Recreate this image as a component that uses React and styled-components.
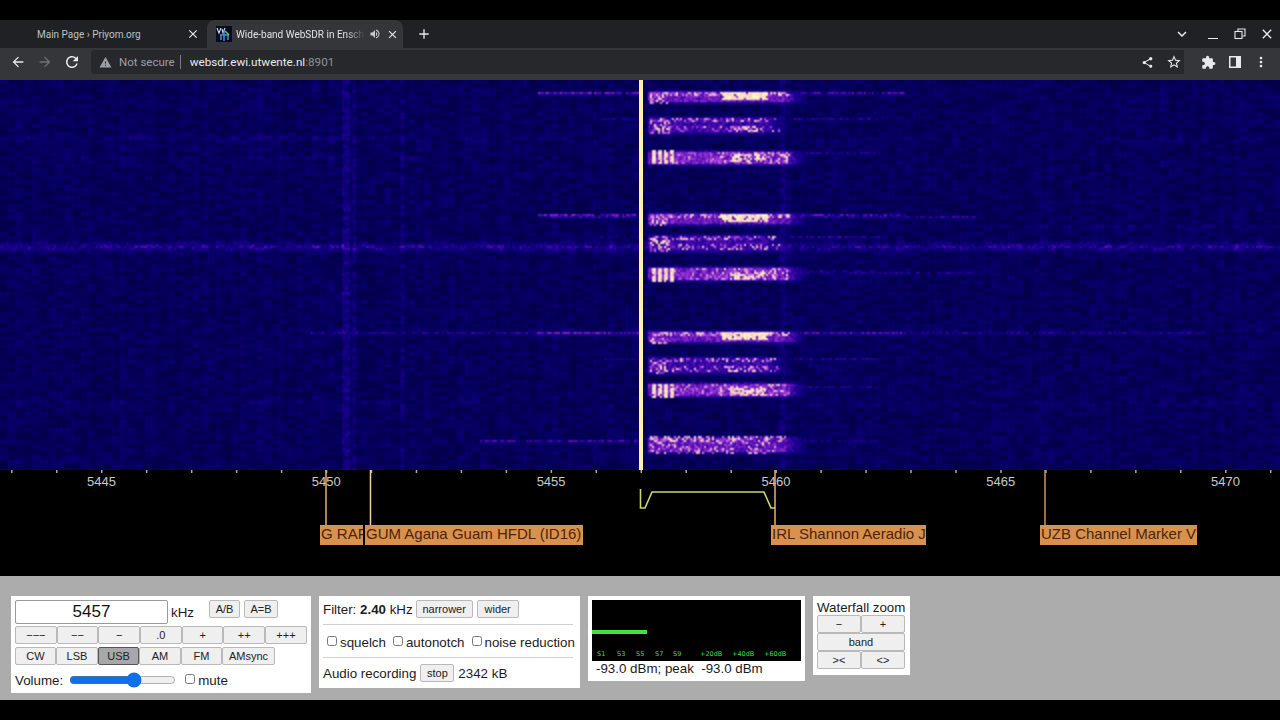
import React, { useEffect, useRef } from 'react';
import styled, { createGlobalStyle } from 'styled-components';
import {
  MdArrowBack, MdArrowForward, MdRefresh, MdWarning, MdStarBorder, MdExtension,
  MdMoreVert, MdClose, MdAdd, MdExpandMore, MdVolumeUp, MdShare
} from 'react-icons/md';

const GlobalStyle = createGlobalStyle`
  html, body { margin: 0; padding: 0; background: #000; }
  body { font-family: "Liberation Sans", Arial, sans-serif; }
`;

const Page = styled.div`
  width: 1280px;
  height: 720px;
  padding: 20px 0;
  box-sizing: border-box;
  display: flex;
  flex-direction: column;
  overflow: hidden;
  background: #000;
`;

/* browser chrome */
const TabStrip = styled.div`
  height: 28px;
  flex: none;
  display: flex;
  align-items: stretch;
  background: #202124;
  color: #e8eaed;
`;
const Tab = styled.div`
  width: ${p => p.$w}px;
  margin-right: ${p => p.$mr || 0}px;
  box-sizing: border-box;
  padding: 0 ${p => p.$pr}px 0 9px;
  display: flex;
  align-items: center;
  background: ${p => (p.$active ? '#35363a' : 'transparent')};
  border-radius: 8px 8px 0 0;
  font: 10px Roboto, "Liberation Sans", sans-serif;
`;
const TabTitle = styled.span`
  flex: 1;
  min-width: 0;
  white-space: nowrap;
  overflow: hidden;
  margin-left: ${p => p.$ml}px;
  color: ${p => (p.$active ? '#dfe1e5' : '#bdc1c6')};
  ${p => p.$fade && 'mask-image: linear-gradient(to right, #000 85%, transparent);'}
`;
const FaviconBox = styled.span`
  width: 16px;
  height: 16px;
  flex: none;
  display: block;
`;
const IconSlot = styled.span`
  display: flex;
  align-items: center;
  justify-content: center;
  width: ${p => p.$w || 16}px;
  flex: none;
  color: ${p => p.$color || '#e8eaed'};
`;
const WindowControls = styled.div`
  margin-left: auto;
  display: flex;
  align-items: center;
`;
const Minimize = styled.span`
  display: block;
  width: 10px;
  height: 1px;
  margin-top: 8px;
  background: #e8eaed;
`;
const Toolbar = styled.div`
  height: 32px;
  flex: none;
  box-sizing: border-box;
  display: flex;
  align-items: center;
  padding: 2px 0 6px 5px;
  background: #35363a;
`;
const NavIcons = styled.div`
  display: flex;
  align-items: center;
  gap: 1px;
  margin-right: 6px;
`;
const Omnibox = styled.div`
  width: 1093px;
  height: 24px;
  box-sizing: border-box;
  display: flex;
  align-items: center;
  padding: 0 0 0 7px;
  background: #27282b;
  border-radius: 4px 0 0 4px;
  font: 11.5px Roboto, "Liberation Sans", sans-serif;
`;
const Secure = styled.span`
  color: #9aa0a6;
  margin-left: 7px;
`;
const Divider = styled.span`
  width: 1px;
  height: 14px;
  background: #7a7d82;
  margin: 0 9px 0 5px;
`;
const Host = styled.span`
  color: #e8eaed;
  font-size: 11.7px;
`;
const Port = styled.span`
  color: #8e9297;
`;
const OmniActions = styled.div`
  margin-left: auto;
  display: flex;
  gap: 11px;
  padding-right: 2px;
`;
const ExtIcons = styled.div`
  display: flex;
  align-items: center;
  margin-left: 15px;
  gap: 8.5px;
`;

/* waterfall */
const WaterfallCanvas = styled.canvas`
  display: block;
  flex: none;
  width: 1280px;
  height: 390px;
`;

function mulberry(seed) {
  let a = seed;
  return () => {
    a |= 0; a = (a + 0x6d2b79f5) | 0;
    let t = Math.imul(a ^ (a >>> 15), 1 | a);
    t = (t + Math.imul(t ^ (t >>> 7), 61 | t)) ^ t;
    return ((t ^ (t >>> 14)) >>> 0) / 4294967296;
  };
}

const STOPS = [
  [0, 2, 0, 50],
  [0.2, 6, 0, 100],
  [0.36, 30, 0, 150],
  [0.52, 105, 20, 190],
  [0.68, 175, 75, 220],
  [0.84, 245, 200, 200],
  [1, 255, 250, 190]
];

function colour(v) {
  const x = Math.max(0, Math.min(1, v));
  for (let i = 1; i < STOPS.length; i++) {
    if (x <= STOPS[i][0]) {
      const a = STOPS[i - 1], b = STOPS[i];
      const t = (x - a[0]) / (b[0] - a[0]);
      return [a[1] + (b[1] - a[1]) * t, a[2] + (b[2] - a[2]) * t, a[3] + (b[3] - a[3]) * t];
    }
  }
  return STOPS[6].slice(1);
}

// y values are relative to the top of the waterfall, x in page pixels
const BURSTS = [
  { kind: 'a', y: 16 }, { kind: 'b', y: 40 }, { kind: 'c', y: 77 },
  { kind: 'a', y: 138 }, { kind: 'b', y: 158 }, { kind: 'c', y: 194 },
  { kind: 'a', y: 256 }, { kind: 'b', y: 280 }, { kind: 'c', y: 310 },
  { kind: 'd', y: 364 }
];

function paintWaterfall(canvas) {
  const W = 640, H = 195;
  const off = document.createElement('canvas');
  off.width = W;
  off.height = H;
  const octx = off.getContext('2d');
  const rnd = mulberry(5457);
  const field = new Float32Array(W * H);
  const add = (x, y, v) => {
    const px = Math.round(x / 2), py = Math.round(y / 2);
    if (px >= 0 && px < W && py >= 0 && py < H) field[py * W + px] = Math.max(field[py * W + px], v);
  };
  const bump = (x, y, v) => {
    const px = Math.round(x / 2), py = Math.round(y / 2);
    if (px >= 0 && px < W && py >= 0 && py < H) field[py * W + px] += v;
  };

  // noise floor, coarser cells like the compressed video
  const cols = new Float32Array(W);
  for (let x = 0; x < W; x++) cols[x] = rnd() * 0.04;
  for (let y = 0; y < H; y += 2) {
    for (let x = 0; x < W; x += 4) {
      const v = 0.07 + rnd() * 0.14;
      for (let j = 0; j < 2 && y + j < H; j++) {
        for (let i = 0; i < 4 && x + i < W; i++) field[(y + j) * W + x + i] = v + cols[x + i];
      }
    }
  }

  // faint horizontal carriers
  const band = (y, h, x0, x1, amp) => {
    for (let yy = y - h; yy <= y + h; yy += 2) {
      const fall = 1 - Math.abs(yy - y) / (h + 1);
      for (let x = x0; x < x1; x += 2) bump(x, yy, amp * fall * (0.4 + rnd()));
    }
  };
  band(165, 6, 0, 1280, 0.2);
  band(57, 3, 0, 420, 0.09);
  band(76, 1, 0, 420, 0.07);
  band(57, 2, 420, 1280, 0.04);
  band(146, 2, 1000, 1280, 0.06);
  band(250, 2, 300, 1280, 0.05);
  band(320, 3, 0, 500, 0.04);
  band(322, 3, 800, 1280, 0.05);

  // faint vertical columns
  const column = (x, w, amp) => {
    for (let y = 0; y < 390; y += 2) {
      for (let xx = x - w; xx <= x + w; xx += 2) bump(xx, y, amp * (0.5 + rnd() * 0.8));
    }
  };
  column(345, 3, 0.13);
  column(353, 1, 0.09);
  column(400, 1, 0.07);
  column(552, 1, 0.02);
  column(782, 2, 0.08);
  column(1107, 1, 0.02);

  // tail of a transmission: a thin line left and right of the carrier
  const line = (y, x0, x1, amp) => {
    for (let x = x0; x < x1; x += 2) {
      if (rnd() > 0.15) {
        add(x, y, amp * (0.7 + rnd() * 0.5));
        add(x, y + 2, amp * 0.55);
      }
    }
  };
  const block = (y0, y1, x0, x1, base, spread, chance) => {
    for (let y = y0; y < y1; y += 2) {
      for (let x = x0; x < x1; x += 2) {
        if (rnd() < chance) add(x, y, base + rnd() * spread);
      }
    }
  };
  // soft purple body that fades toward its right end
  const glow = (y0, y1, x0, x1, v) => {
    for (let y = y0; y < y1; y += 2) {
      const edge = Math.min(y - y0 + 2, y1 - y) / 4;
      for (let x = x0; x < x1; x += 2) {
        const tail = x > x1 - 25 ? (x1 - x) / 25 : 1;
        add(x, y, (0.18 + (v - 0.18) * Math.min(1, edge) * tail) * (0.82 + rnd() * 0.36));
      }
    }
  };

  BURSTS.forEach(({ kind, y }) => {
    if (kind === 'a') {
      line(y - 4, 535, 640, 0.5);
      line(y - 4, 800, 905, 0.46);
      glow(y - 6, y + 8, 648, 808, 0.52);
      block(y - 5, y - 1, 650, 720, 0.6, 0.3, 0.55);
      block(y - 5, y - 1, 720, 790, 0.66, 0.3, 0.6);
      block(y - 4, y + 3, 722, 768, 0.84, 0.18, 0.85);
      block(y - 3, y + 6, 650, 668, 0.56, 0.4, 0.45);
    } else if (kind === 'b') {
      line(y - 2, 600, 640, 0.3);
      line(y - 2, 790, 880, 0.36);
      glow(y - 4, y + 15, 648, 790, 0.42);
      block(y - 3, y + 1, 650, 775, 0.52, 0.38, 0.45);
      block(y + 6, y + 12, 650, 780, 0.48, 0.4, 0.28);
      block(y + 2, y + 14, 650, 670, 0.6, 0.38, 0.45);
      block(y + 5, y + 10, 728, 768, 0.6, 0.36, 0.38);
    } else if (kind === 'c') {
      line(y - 5, 800, 880, 0.34);
      glow(y - 8, y + 8, 648, 808, 0.54);
      block(y - 6, y + 5, 672, 720, 0.52, 0.3, 0.3);
      block(y - 6, y + 5, 720, 790, 0.58, 0.34, 0.42);
      block(y - 3, y + 4, 730, 765, 0.76, 0.24, 0.55);
      for (let k = 0; k < 4; k++) block(y - 7, y + 7, 652 + k * 6, 655 + k * 6, 0.8, 0.2, 0.9);
    } else {
      line(y - 5, 480, 640, 0.42);
      line(y - 5, 800, 880, 0.3);
      glow(y - 8, y + 10, 648, 808, 0.5);
      block(y - 8, y - 3, 650, 785, 0.6, 0.32, 0.5);
      block(y - 3, y + 9, 650, 775, 0.52, 0.38, 0.3);
    }
  });
  // long faint lines at the later transmissions
  line(252, 305, 640, 0.36);
  line(252, 800, 1205, 0.34);
  line(192, 800, 975, 0.34);
  line(136, 550, 640, 0.4);
  line(136, 800, 975, 0.38);

  const img = octx.createImageData(W, H);
  for (let i = 0; i < W * H; i++) {
    const [r, g, b] = colour(field[i]);
    img.data[i * 4] = r;
    img.data[i * 4 + 1] = g;
    img.data[i * 4 + 2] = b;
    img.data[i * 4 + 3] = 255;
  }
  octx.putImageData(img, 0, 0);

  canvas.width = 1280;
  canvas.height = 390;
  const ctx = canvas.getContext('2d');
  ctx.imageSmoothingEnabled = true;
  ctx.filter = 'blur(0.7px)';
  ctx.drawImage(off, 0, 0, 1280, 390);
  ctx.filter = 'none';

  // the bright carrier
  ctx.fillStyle = '#fff0a8';
  ctx.fillRect(639, 0, 4, 390);
}

function Waterfall() {
  const ref = useRef(null);
  useEffect(() => { paintWaterfall(ref.current); }, []);
  return <WaterfallCanvas ref={ref} />;
}

/* frequency scale */
const Ruler = styled.div`
  position: relative;
  height: 106px;
  flex: none;
  background: #000;
`;
const RulerDrawing = styled.svg`
  display: block;
`;
const ScaleText = styled.text`
  font: 13px "Liberation Sans", sans-serif;
  fill: #c8c8c8;
  text-anchor: middle;
`;
const StationTag = styled.div`
  position: absolute;
  top: 55px;
  left: ${p => p.$left}px;
  width: ${p => p.$w}px;
  height: 20px;
  box-sizing: border-box;
  padding: 0 1px;
  overflow: hidden;
  white-space: nowrap;
  background: #d9914f;
  color: #4d2408;
  font-size: 15px;
  line-height: 18px;
`;

const SCALE = [5445, 5450, 5455, 5460, 5465, 5470];
const STATION_LINES = [
  { x: 326, c: '#e8ae7a' },
  { x: 370.5, c: '#f5cfa5' },
  { x: 775, c: '#e8ae7a' },
  { x: 1045, c: '#d9914f' }
];

function FrequencyScale() {
  const ticks = [];
  for (let k = -2; k < 27; k++) ticks.push(101 + k * 44.96);
  return (
    <Ruler>
      <RulerDrawing width="1280" height="106">
        {ticks.map(x => <rect key={x} x={x} y="0" width="1.5" height="3" fill="#aaa" />)}
        {SCALE.map((f, i) => <ScaleText key={f} x={101.5 + i * 224.8} y="16">{f}</ScaleText>)}
        {STATION_LINES.map(l => <rect key={l.x} x={l.x - 0.75} y="0" width="1.5" height="56" fill={l.c} />)}
        <polyline points="640.5,19 640.5,38 645,38 652,22 764,22 771,38 775,38" fill="none" stroke="#c9d873" strokeWidth="1.6" />
      </RulerDrawing>
      <StationTag $left={320} $w={43}>G RAF</StationTag>
      <StationTag $left={365} $w={218}>GUM Agana Guam HFDL (ID16)</StationTag>
      <StationTag $left={771} $w={155}>IRL Shannon Aeradio J</StationTag>
      <StationTag $left={1040} $w={157}>UZB Channel Marker V</StationTag>
    </Ruler>
  );
}

/* control panels */
const Controls = styled.div`
  flex: 1;
  display: flex;
  align-items: flex-start;
  gap: 8px;
  padding: 20px 0 0 11px;
  background: #acacac;
  color: #1c1c1c;
  font-size: 13.33px;
`;
const Panel = styled.div`
  width: ${p => p.$w}px;
  height: ${p => p.$h}px;
  box-sizing: border-box;
  padding: 4px;
  background: #fff;
  flex: none;
`;
const Row = styled.div`
  display: flex;
  align-items: center;
  height: ${p => p.$h}px;
  margin-top: ${p => p.$mt || 0}px;
`;
const Btn = styled.button`
  appearance: none;
  box-sizing: border-box;
  width: ${p => (p.$w ? `${p.$w}px` : 'auto')};
  height: ${p => p.$h || 18}px;
  margin: 0 ${p => p.$mr || 0}px 0 ${p => p.$ml || 0}px;
  padding: 0;
  background: ${p => (p.$on ? '#a8a8a8' : '#efefef')};
  border: 1px solid ${p => (p.$on ? '#555' : '#b9b9b9')};
  border-radius: 2px;
  color: #222;
  font: 11px "Liberation Sans", sans-serif;
`;
const TopBtn = styled(Btn)`
  align-self: flex-start;
`;
const FreqInput = styled.input`
  box-sizing: border-box;
  width: 153px;
  height: 24px;
  padding: 0;
  border: 1px solid #9a9a9a;
  border-radius: 2px;
  text-align: center;
  color: #111;
  font: 17px "Liberation Sans", sans-serif;
  outline: none;
`;
const Unit = styled.span`
  margin: 1px 0 0 3px;
  width: 38px;
`;
const StepGrid = styled.div`
  display: grid;
  grid-template-columns: repeat(7, 41.7px);
  margin-top: 2px;
  height: 18px;
`;
const VolumeSlider = styled.input`
  width: 107px;
  height: 14px;
  margin: 0 9px 0 6px;
  accent-color: #0f6fe8;
`;
const Check = styled.input`
  width: 10px;
  height: 10px;
  margin: 0 ${p => p.$mr || 3}px 2px ${p => p.$ml || 0}px;
`;
const Rule = styled.div`
  height: 1px;
  background: #cfcfcf;
  margin: ${p => p.$m};
`;
const MeterBox = styled.svg`
  display: block;
`;
const MeterText = styled.text`
  font: 6.5px "DejaVu Sans", sans-serif;
  fill: #4fdc4f;
`;
const Readout = styled.div`
  margin: 0 0 0 4px;
  line-height: 15px;
  white-space: pre;
`;
const ZoomTitle = styled.div`
  line-height: 15px;
  white-space: nowrap;
`;
const ZoomGrid = styled.div`
  display: grid;
  grid-template-columns: 44px 44px;
  grid-auto-rows: 18px;
`;
const Wide = styled(Btn)`
  grid-column: span 2;
`;

const STEPS = ['−−−', '−−', '−', '.0', '+', '++', '+++'];
const MODES = [['CW', 41], ['LSB', 42], ['USB', 41], ['AM', 42], ['FM', 41], ['AMsync', 53]];
const METER_LABELS = [[5, 'S1'], [25, 'S3'], [44, 'S5'], [63, 'S7'], [81, 'S9'], [108, '+20dB'], [140, '+40dB'], [172, '+60dB']];

function RestoreIcon() {
  return (
    <svg width="12" height="12" viewBox="0 0 12 12" fill="none" stroke="#e8eaed" strokeWidth="1.1">
      <rect x="1" y="3.5" width="7" height="7" />
      <path d="M4 3V1h7v7H8.500" />
    </svg>
  );
}

function SidePanelIcon() {
  return (
    <svg width="12" height="12" viewBox="0 0 12 12">
      <rect x="0" y="0" width="12" height="12" fill="#e8eaed" />
      <rect x="1.5" y="1.5" width="5.5" height="9" fill="#35363a" />
    </svg>
  );
}

function SdrFavicon() {
  return (
    <svg width="16" height="16" viewBox="0 0 16 16">
      <rect width="16" height="16" fill="#0a0a1e" />
      <path d="M1 2l2 5 2-5M6 3l1 4 2-5" fill="none" stroke="#cfe0ff" strokeWidth="1.1" />
      <path d="M4 9h9M8 5v10M5 14v-5M12 14V9" fill="none" stroke="#3f8fe0" strokeWidth="1.5" />
      <path d="M9 5l4 4" stroke="#55c855" strokeWidth="1.6" />
    </svg>
  );
}

export default function App() {
  return (
    <Page>
      <GlobalStyle />
      <TabStrip>
        <Tab $w={207} $pr={6}>
          <FaviconBox />
          <TabTitle $ml={12}>Main Page › Priyom.org</TabTitle>
          <IconSlot><MdClose size={14} /></IconSlot>
        </Tab>
        <Tab $w={196} $mr={13} $pr={3} $active>
          <FaviconBox><SdrFavicon /></FaviconBox>
          <TabTitle $ml={4} $active $fade>Wide-band WebSDR in Enschede, the Netherlands</TabTitle>
          <IconSlot $w={19} $color="#c8cacd"><MdVolumeUp size={12} /></IconSlot>
          <IconSlot><MdClose size={13} /></IconSlot>
        </Tab>
        <IconSlot><MdAdd size={18} /></IconSlot>
        <WindowControls>
          <IconSlot $w={36}><MdExpandMore size={18} /></IconSlot>
          <IconSlot $w={26}><Minimize /></IconSlot>
          <IconSlot $w={28}><RestoreIcon /></IconSlot>
          <IconSlot $w={26}><MdClose size={16} /></IconSlot>
        </WindowControls>
      </TabStrip>
      <Toolbar>
        <NavIcons>
          <IconSlot $w={26}><MdArrowBack size={16} /></IconSlot>
          <IconSlot $w={26} $color="#6f7276"><MdArrowForward size={16} /></IconSlot>
          <IconSlot $w={26}><MdRefresh size={18} /></IconSlot>
        </NavIcons>
        <Omnibox>
          <IconSlot $w={14} $color="#9aa0a6"><MdWarning size={13} /></IconSlot>
          <Secure>Not secure</Secure>
          <Divider />
          <Host>websdr.ewi.utwente.nl<Port>:8901</Port></Host>
          <OmniActions>
            <IconSlot><MdShare size={13} /></IconSlot>
            <IconSlot><MdStarBorder size={16} /></IconSlot>
          </OmniActions>
        </Omnibox>
        <ExtIcons>
          <IconSlot $w={18}><MdExtension size={15} /></IconSlot>
          <IconSlot $w={18}><SidePanelIcon /></IconSlot>
          <IconSlot $w={18}><MdMoreVert size={16} /></IconSlot>
        </ExtIcons>
      </Toolbar>

      <Waterfall />
      <FrequencyScale />

      <Controls>
        <Panel $w={300} $h={97}>
          <Row $h={24}>
            <FreqInput defaultValue="5457" />
            <Unit>kHz</Unit>
            <TopBtn $w={31} $mr={4}>A/B</TopBtn>
            <TopBtn $w={34}>A=B</TopBtn>
          </Row>
          <StepGrid>
            {STEPS.map(s => <Btn key={s} $w={41.7}>{s}</Btn>)}
          </StepGrid>
          <Row $h={18} $mt={3}>
            {MODES.map(([m, w]) => <Btn key={m} $w={w} $on={m === 'USB'}>{m}</Btn>)}
          </Row>
          <Row $h={20} $mt={5}>
            Volume:
            <VolumeSlider type="range" min="0" max="100" defaultValue="62" />
            <Check type="checkbox" />mute
          </Row>
        </Panel>

        <Panel $w={261} $h={92}>
          <Row $h={18}>
            Filter:&nbsp;<b>2.40</b>&nbsp;kHz
            <Btn $w={57} $ml={3} $mr={4}>narrower</Btn>
            <Btn $w={42}>wider</Btn>
          </Row>
          <Rule $m="6px 3px 7px 0" />
          <Row $h={20}>
            <Check type="checkbox" $ml={4} />squelch
            <Check type="checkbox" $ml={7} />autonotch
            <Check type="checkbox" $ml={7} />noise reduction
          </Row>
          <Rule $m="5px 3px 6px 0" />
          <Row $h={18}>
            Audio recording
            <Btn $w={34} $ml={4} $mr={4}>stop</Btn>
            2342 kB
          </Row>
        </Panel>

        <Panel $w={217} $h={85}>
          <MeterBox width="209" height="61">
            <rect width="209" height="61" fill="#000" />
            <rect y="30" width="55" height="4" fill="#3fe03f" />
            {METER_LABELS.map(([x, t]) => <MeterText key={t} x={x} y="56">{t}</MeterText>)}
          </MeterBox>
          <Readout>{'-93.0 dBm; peak  -93.0 dBm'}</Readout>
        </Panel>

        <Panel $w={97} $h={79}>
          <ZoomTitle>Waterfall zoom</ZoomTitle>
          <ZoomGrid>
            <Btn $w={44}>−</Btn>
            <Btn $w={44}>+</Btn>
            <Wide $w={88}>band</Wide>
            <Btn $w={44}>&gt;&lt;</Btn>
            <Btn $w={44}>&lt;&gt;</Btn>
          </ZoomGrid>
        </Panel>
      </Controls>
    </Page>
  );
}
